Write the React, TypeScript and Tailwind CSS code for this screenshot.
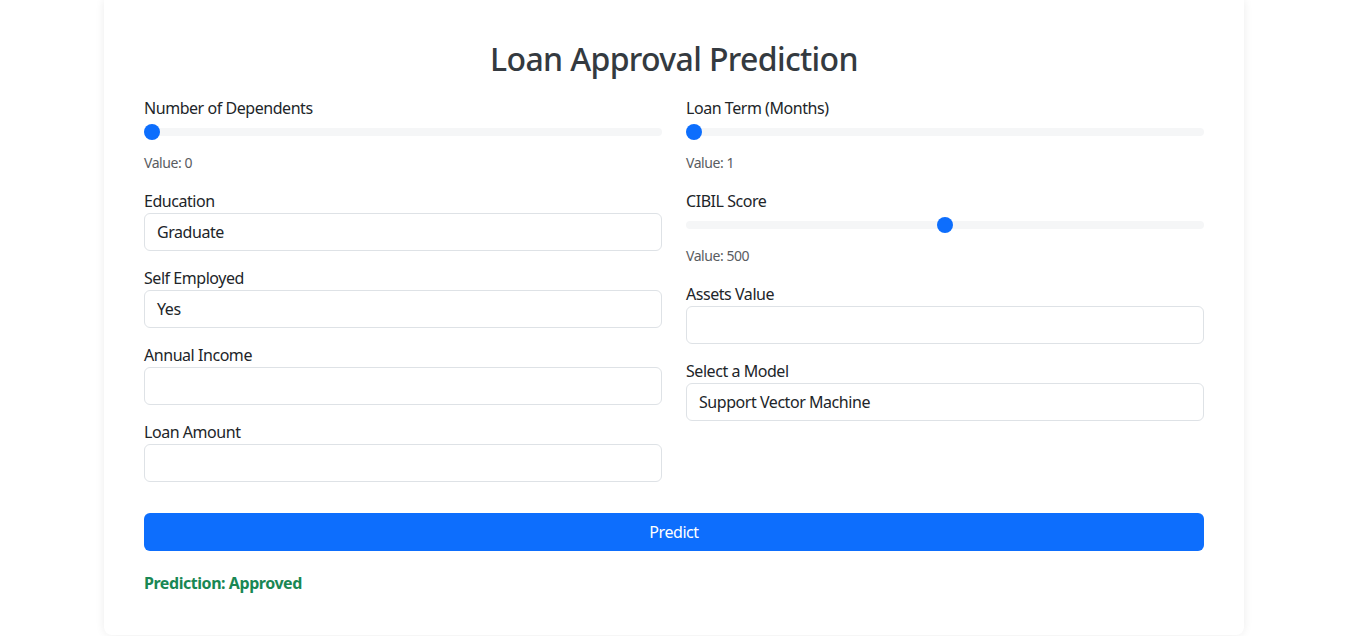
import React from "react";

function Slider({ label, value, min, max }: { label: string; value: number; min: number; max: number }) {
  const pct = (value - min) / (max - min);
  return (
    <div className="mb-4">
      <label className="block leading-6 text-[#212529]">{label}</label>
      <div className="mt-px flex h-[22px] items-center">
        <div className="relative h-2 w-full rounded-full bg-[#f5f6f7]">
          <div
            className="absolute top-1/2 h-4 w-4 -translate-y-1/2 rounded-full bg-[#0d6efd]"
            style={{ left: `calc((100% - 16px) * ${pct})` }}
          />
        </div>
      </div>
      <div className="mt-[9px] text-sm leading-[21px] text-[#595c5f]">Value: {value}</div>
    </div>
  );
}

function Field({ label, value }: { label: string; value?: string }) {
  return (
    <div className="mb-[15px]">
      <label className="block leading-6 text-[#212529]">{label}</label>
      <div className="flex h-[38px] items-center rounded-md border border-[#dee2e6] bg-white px-3 text-[#212529]">
        {value}
      </div>
    </div>
  );
}

export default function App() {
  return (
    <div className="min-h-screen bg-white font-['Segoe_UI','Noto_Sans',sans-serif] text-base tracking-[-0.45px]">
      <div className="ml-[104px] w-[1140px] rounded-b-lg bg-white px-10 pb-10 pt-10 shadow-[0_0_10px_rgba(0,0,0,0.08)]">
        <h2 className="mb-[18px] text-center text-[32px] font-medium leading-[38px] tracking-[-0.65px] text-[#343a40]">
          Loan Approval Prediction
        </h2>
        <div className="grid grid-cols-2 gap-x-6">
          <div>
            <Slider label="Number of Dependents" value={0} min={0} max={5} />
            <Field label="Education" value="Graduate" />
            <Field label="Self Employed" value="Yes" />
            <Field label="Annual Income" />
            <Field label="Loan Amount" />
          </div>
          <div>
            <Slider label="Loan Term (Months)" value={1} min={1} max={30} />
            <Slider label="CIBIL Score" value={500} min={0} max={1000} />
            <Field label="Assets Value" />
            <Field label="Select a Model" value="Support Vector Machine" />
          </div>
        </div>
        <button className="mt-4 h-[38px] w-full rounded-md bg-[#0d6efd] text-white">Predict</button>
        <div className="mt-5 font-bold leading-6 text-[#198754]">Prediction: Approved</div>
      </div>
    </div>
  );
}
